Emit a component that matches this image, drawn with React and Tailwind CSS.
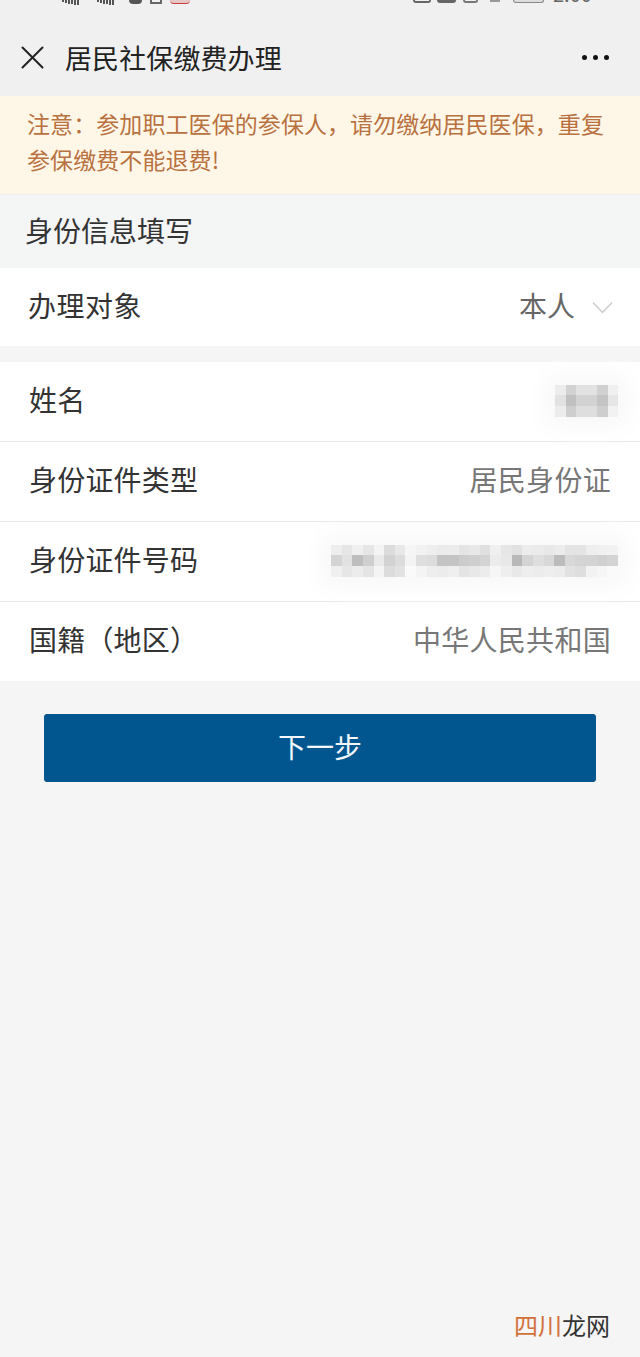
const font = { fontFamily: '"Noto Sans CJK SC", "Liberation Sans", sans-serif' };

const nameCells = [
  "#ececec", "#d2d2d2", "#e2e2e2", "#e2e2e2", "#d0d0d0", "#f0f0f0",
  "#e2e2e2", "#c0c0c0", "#d2d2d2", "#d2d2d2", "#c4c4c4", "#e6e6e6",
  "#ececec", "#cecece", "#dedede", "#dedede", "#cecece", "#f2f2f2",
];
const idRows = [
  ["#eeeeee","#e6e6e6","#f0f0f0","#e6e6e6","#f4f4f4","#dcdcdc","#e8e8e8","#f6f6f6","#f2f2f2","#eeeeee","#ebebeb","#ececec","#e4e4e4","#e8e8e8","#e0e0e0","#f0f0f0","#e6e6e6","#e2e2e2","#ececec","#ebebeb","#e8e8e8","#ececec","#e4e4e4","#e4e4e4","#eeeeee","#f0f0f0","#f2f2f2"],
  ["#d4d4d4","#e2e2e2","#bebebe","#cfcfcf","#eaeaea","#d2d2d2","#dcdcdc","#f4f4f4","#dedede","#dcdcdc","#c4c4c4","#c4c4c4","#cccccc","#cfcfcf","#d4d4d4","#ececec","#e8e8e8","#b8b8b8","#d4d4d4","#dedede","#d8d8d8","#bcbcbc","#d8d8d8","#d4d4d4","#d4d4d4","#d0d0d0","#d4d4d4"],
  ["#f0f0f0","#e6e6e6","#ececec","#e4e4e4","#f4f4f4","#dcdcdc","#e2e2e2","#fafafa","#f4f4f4","#eeeeee","#ececec","#efefef","#e4e4e4","#e8e8e8","#ececec","#f6f6f6","#eeeeee","#e8e8e8","#eeeeee","#ececec","#eeeeee","#ececec","#e2e2e2","#dedede","#f2f2f2","#f6f6f6","#fafafa"],
];

function Mosaic({ cells, cols, className }) {
  return (
    <div
      className={`grid h-8 shadow-[0_0_24px_10px_#f8f8f8] ${className}`}
      style={{ gridTemplateColumns: `repeat(${cols}, 1fr)`, gridTemplateRows: "repeat(3, 1fr)" }}
    >
      {cells.map((c, i) => (
        <div key={i} style={{ backgroundColor: c }} />
      ))}
    </div>
  );
}

function Row({ label, children, last = false }) {
  return (
    <div className={`flex items-center justify-between bg-white pl-[29px] pr-[22px] ${last ? "h-[79px]" : "h-20 border-b border-[#e9e9e9]"}`}>
      <span className="pb-[6px] text-[28px] leading-none tracking-[0.2px] text-[#333333]">{label}</span>
      {children}
    </div>
  );
}

function Value({ children }) {
  return <span className="mr-[7px] pb-[6px] text-[28px] leading-none tracking-[0.3px] text-[#777777]">{children}</span>;
}

function Bars() {
  return (
    <>
      {[2, 3, 4, 4, 5, 5].map((h, i) => (
        <span key={i} className="w-[2px] bg-[#555555]" style={{ height: h }} />
      ))}
    </>
  );
}

function StatusBar() {
  return (
    <div className="relative flex h-[22px] items-start overflow-hidden text-[#666666]">
      <div className="ml-[62px] flex items-start gap-[1px]">
        <Bars />
      </div>
      <div className="ml-[18px] flex items-start gap-[1px]">
        <Bars />
      </div>
      <div className="ml-[15px] h-[4px] w-[13px] rounded-b-sm bg-[#555555]" />
      <div className="ml-[8px] h-[4px] w-[12px] rounded-b-[1px] border-x-2 border-b-2 border-[#666666]" />
      <div className="ml-[8px] h-[4px] w-[20px] rounded-b-sm border-b border-[#c63d3d] bg-[#e9c6c6]" />
      <div className="ml-[223px] h-[3px] w-[18px] rounded-b-full border-x-2 border-b-2 border-[#666666]" />
      <div className="ml-[6px] h-[3px] w-[19px] rounded-b-sm bg-[#666666]" />
      <div className="ml-[7px] h-[3px] w-[15px] rounded-b-full border-x-2 border-b-2 border-[#777777]" />
      <div className="ml-[12px] h-[2px] w-[10px] bg-[#999999]" />
      <div className="ml-[13px] h-[3px] w-[31px] rounded-b-sm border border-t-0 border-[#888888] bg-[#dddddd]" />
      <span className="ml-[9px] -mt-[16px] text-[20px] leading-[20px] text-[#666666]">2:00</span>
    </div>
  );
}

export default function App() {
  return (
    <div className="flex min-h-[1357px] flex-col bg-[#f5f5f5]" style={font}>
      <div className="bg-[#f0f0f0]">
        <StatusBar />
        <div className="flex h-[74px] items-center pb-[3px] pl-[21px] pr-[31px]">
          <svg width="23" height="23" viewBox="0 0 23 23" className="shrink-0" fill="none" stroke="#222222" strokeWidth="2" strokeLinecap="round">
            <path d="M1.5 1.5 L21.5 21.5 M21.5 1.5 L1.5 21.5" />
          </svg>
          <span className="ml-[21px] text-[27px] leading-none tracking-[0.1px] text-[#222222]">居民社保缴费办理</span>
          <div className="ml-auto flex gap-[6px]">
            <span className="size-[5px] rounded-full bg-[#111111]" />
            <span className="size-[5px] rounded-full bg-[#111111]" />
            <span className="size-[5px] rounded-full bg-[#111111]" />
          </div>
        </div>
      </div>

      <div className="h-[99px] border-b border-[#eeeeee] bg-[#fef7e8] pl-[27px] pr-[20px] pt-[9px] text-[23px] leading-[36px] tracking-[0.08px] text-[#b9713f]">
        注意：参加职工医保的参保人，请勿缴纳居民医保，重复
        <br />
        参保缴费不能退费!
      </div>

      <div className="flex h-[73px] items-center bg-[#f4f5f5] pb-[4px] pl-[25px] text-[28px] leading-none text-[#333333]">身份信息填写</div>

      <div className="flex h-[78px] items-center justify-between bg-white pl-[28px] pr-[27px]">
        <span className="pb-[4px] text-[28px] leading-none tracking-[0.5px] text-[#333333]">办理对象</span>
        <div className="flex items-center gap-[17px]">
          <span className="pb-[4px] text-[28px] leading-none text-[#666666]">本人</span>
          <svg width="21" height="13" viewBox="0 0 21 13" fill="none" stroke="#cccccc" strokeWidth="1.5">
            <path d="M1 1.5 L10.5 11.5 L20 1.5" />
          </svg>
        </div>
      </div>

      <div className="mt-4 flex flex-col">
        <Row label="姓名">
          <Mosaic cells={nameCells} cols={6} className="-mt-[2px] w-[63px]" />
        </Row>
        <Row label="身份证件类型">
          <Value>居民身份证</Value>
        </Row>
        <Row label="身份证件号码">
          <Mosaic cells={idRows.flat()} cols={27} className="-mt-[2px] w-[287px]" />
        </Row>
        <Row label="国籍（地区）" last>
          <Value>中华人民共和国</Value>
        </Row>
      </div>

      <button className="mx-[44px] mt-[33px] flex h-[68px] items-center justify-center rounded-[3px] bg-[#02568f] pb-[4px] text-[28px] leading-none text-[#f4f8fb]">
        下一步
      </button>

      <div className="mt-auto flex justify-end pb-[17px] pr-[30px] text-[24px] leading-[30px]">
        <span className="text-[#d2703a]">四川</span>
        <span className="text-[#333333]">龙网</span>
      </div>
    </div>
  );
}
